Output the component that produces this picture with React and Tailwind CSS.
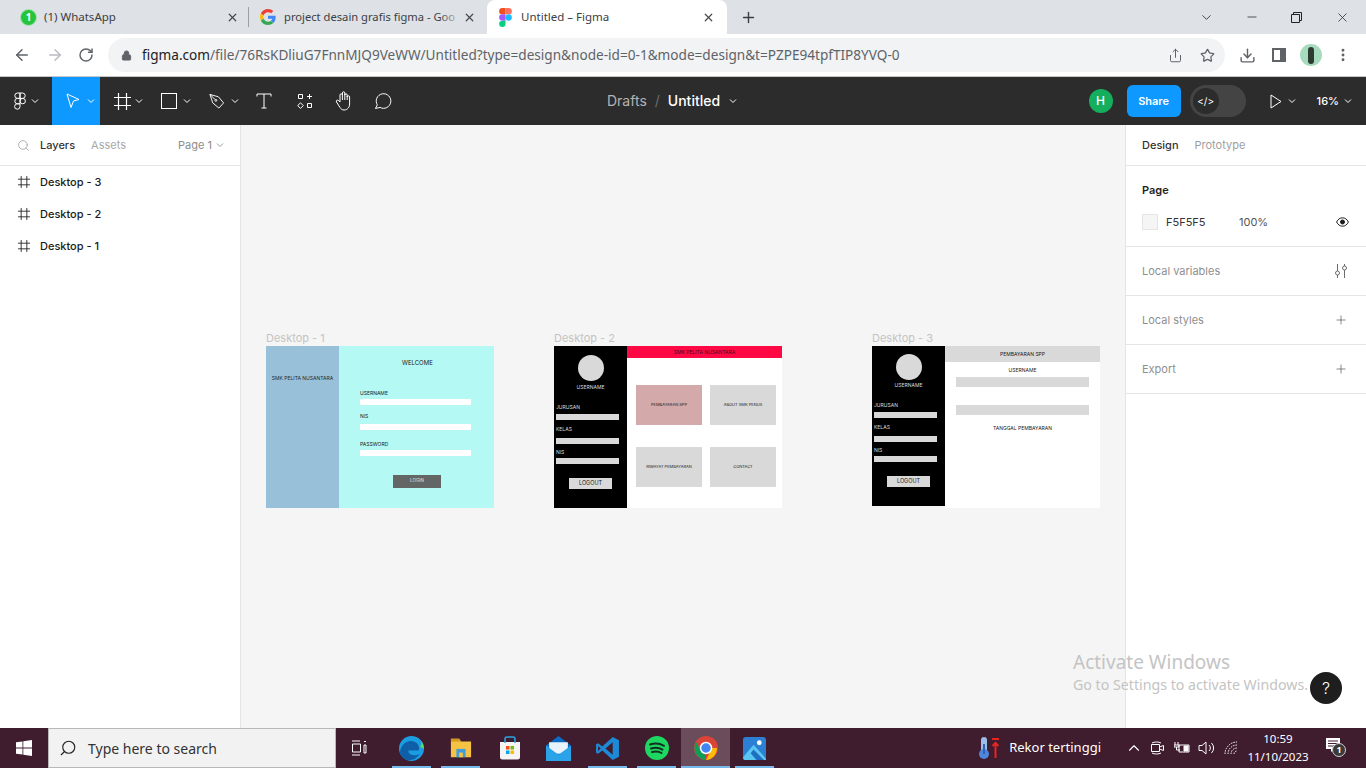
import React from 'react';
import { Search, ChevronDown, Plus, X, ArrowLeft, ArrowRight, RotateCw, Lock, Star, Download, Share, MoreVertical, Minus, ChevronUp } from 'lucide-react';

const sans = { fontFamily: '"Segoe UI", "Noto Sans", sans-serif' };
const inter = { fontFamily: 'Inter, sans-serif' };

const Caret = ({ className = 'text-white' }) => (
  <svg width="8" height="8" viewBox="0 0 8 8" className={className} fill="none" stroke="currentColor">
    <path d="M1 2.5 L4 5.5 L7 2.5" />
  </svg>
);

const FrameIcon = ({ size = 17, color = 'white' }) => (
  <svg width={size} height={size} viewBox="0 0 17 17" fill="none" stroke={color} strokeWidth="1.2">
    <path d="M4.5 0v17M12.5 0v17M0 4.5h17M0 12.5h17" />
  </svg>
);

const FigmaLogo = () => (
  <svg width="13" height="19" viewBox="0 0 38 57">
    <path fill="#f24e1e" d="M19 0H9.5a9.5 9.5 0 0 0 0 19H19z" />
    <path fill="#ff7262" d="M19 0h9.5a9.5 9.5 0 0 1 0 19H19z" />
    <path fill="#a259ff" d="M19 19H9.5a9.5 9.5 0 0 0 0 19H19z" />
    <circle fill="#1abcfe" cx="28.5" cy="28.5" r="9.5" />
    <path fill="#0acf83" d="M9.5 38H19v9.5a9.5 9.5 0 1 1-9.5-9.5z" />
  </svg>
);

const GoogleLogo = () => (
  <svg width="16" height="16" viewBox="0 0 48 48">
    <path fill="#ea4335" d="M24 9.5c3.5 0 6.7 1.2 9.2 3.6l6.9-6.9C35.9 2.4 30.4 0 24 0 14.6 0 6.5 5.4 2.6 13.2l8 6.2C12.5 13.6 17.8 9.5 24 9.5z" />
    <path fill="#4285f4" d="M46.9 24.5c0-1.6-.1-3.1-.4-4.5H24v9h12.9c-.6 3-2.2 5.5-4.7 7.2l7.7 6c4.5-4.2 7-10.3 7-17.7z" />
    <path fill="#fbbc05" d="M10.5 28.6c-.5-1.4-.8-3-.8-4.6s.3-3.2.8-4.6l-8-6.2C.9 16.4 0 20.1 0 24s.9 7.6 2.6 10.8z" />
    <path fill="#34a853" d="M24 48c6.5 0 11.9-2.1 15.9-5.8l-7.7-6c-2.2 1.4-4.9 2.3-8.2 2.3-6.2 0-11.5-4.2-13.4-9.8l-8 6.2C6.5 42.6 14.6 48 24 48z" />
  </svg>
);

const RestoreIcon = () => (
  <svg width="11" height="11" viewBox="0 0 11 11" fill="none" stroke="#202124">
    <path d="M.5 2.5h8v8h-8z" />
    <path d="M2.5 2.5v-2h8v8h-2" />
  </svg>
);

const Tabs = () => (
  <div className="flex h-[34px] items-end bg-[#dee1e6] pl-[8px]">
    <div className="flex h-[34px] w-[240px] items-center pl-[13px] pr-[9px]">
      <span className="flex h-[15px] w-[15px] items-center justify-center rounded-full bg-[#25c43e] text-[10px] font-bold leading-none text-white ring-1 ring-[#9fe0aa]">1</span>
      <span className="ml-[8px] flex-1 text-[11.5px] text-[#3c4043]" style={sans}>(1) WhatsApp</span>
      <X size={13} strokeWidth={2.2} className="text-[#45494e]" />
    </div>
    <div className="h-[20px] w-px self-center bg-[#9aa0a6]" />
    <div className="flex h-[34px] w-[238px] items-center pl-[11px] pr-[11px]">
      <GoogleLogo />
      <span className="relative ml-[8px] flex-1 whitespace-nowrap text-[11.2px] text-[#3c4043]" style={sans}>
        project desain grafis figma - Goo
        <span className="absolute right-0 top-0 h-full w-[24px] bg-gradient-to-r from-transparent to-[#dee1e6]" />
      </span>
      <X size={13} strokeWidth={2.2} className="text-[#45494e]" />
    </div>
    <div className="flex h-[34px] w-[240px] items-center rounded-t-lg bg-white pl-[12px] pr-[12px]">
      <FigmaLogo />
      <span className="ml-[9px] flex-1 text-[11.5px] text-[#3c4043]" style={sans}>Untitled – Figma</span>
      <X size={13} strokeWidth={2.2} className="text-[#45494e]" />
    </div>
    <Plus size={17} strokeWidth={2} className="mb-[8px] ml-[13px] text-[#3c4043]" />
    <div className="flex-1" />
    <div className="flex h-[34px] items-center text-[#3c4043]">
      <ChevronDown size={15} strokeWidth={1.5} className="mr-[31px]" />
      <Minus size={14} strokeWidth={1.5} className="mr-[32px]" />
      <RestoreIcon />
      <X size={15} strokeWidth={1.4} className="ml-[33px] mr-[16px]" />
    </div>
  </div>
);

const AddressBar = () => (
  <div className="flex h-[43px] items-center border-b border-[#c8c8c8] bg-white pl-[13px]">
    <ArrowLeft size={18} strokeWidth={2} className="text-[#5f6368]" />
    <ArrowRight size={18} strokeWidth={2} className="ml-[15px] text-[#b9bcc0]" />
    <RotateCw size={16} strokeWidth={2.2} className="ml-[14px] text-[#5f6368]" />
    <div className="ml-[14px] flex h-[34px] w-[1117px] items-center rounded-full bg-[#f1f3f4] pl-[13px] pr-[10px]">
      <Lock size={11} fill="#5f6368" strokeWidth={2} className="text-[#5f6368]" />
      <span className="ml-[10px] flex-1 whitespace-nowrap text-[13.6px] text-[#5f6368]" style={sans}>
        <span className="text-[#202124]">figma.com</span>/file/76RsKDliuG7FnnMJQ9VeWW/Untitled?type=design&amp;node-id=0-1&amp;mode=design&amp;t=PZPE94tpfTIP8YVQ-0
      </span>
      <Share size={15} strokeWidth={1.6} className="mr-[17px] text-[#5f6368]" />
      <Star size={15} strokeWidth={2} className="text-[#5f6368]" />
    </div>
    <Download size={17} strokeWidth={2} className="ml-[14px] text-[#5f6368]" />
    <span className="ml-[16px] h-[14px] w-[14px] border-[2px] border-r-[6px] border-[#5f6368]" />
    <span className="ml-[14px] flex h-[22px] w-[22px] items-center justify-center rounded-full bg-[#a6dcbd]">
      <span className="h-[17px] w-[6px] rounded-sm bg-[#2d3b30]" />
    </span>
    <MoreVertical size={16} strokeWidth={2.4} className="ml-[13px] text-[#5f6368]" />
  </div>
);

const FigmaToolbar = () => (
  <div className="flex h-[48px] items-center bg-[#2c2c2c] text-white">
    <div className="flex w-[52px] items-center justify-center gap-[5px]">
      <svg width="12" height="18" viewBox="0 0 12 18" fill="none" stroke="white">
        <path d="M6 1H3.5a2.7 2.7 0 0 0 0 5.4H6zM6 1h2.5a2.7 2.7 0 0 1 0 5.4H6zM6 6.400H3.5a2.7 2.7 0 0 0 0 5.4H6z" />
        <circle cx="8.7" cy="9.1" r="2.7" />
        <path d="M3.5 11.8H6v2.7a2.7 2.7 0 1 1-2.5-2.7z" />
      </svg>
      <Caret />
    </div>
    <div className="flex h-[48px] w-[48px] items-center gap-[7px] bg-[#0d99ff] pl-[14px]">
      <svg width="14" height="16" viewBox="0 0 14 16" fill="none" stroke="white">
        <path d="M1 1 L13 6.5 L7.5 8 L5 14.5 Z" />
      </svg>
      <Caret />
    </div>
    <span className="ml-[14px]"><FrameIcon /></span>
    <Caret className="ml-[4px] text-white" />
    <span className="ml-[18px] h-[16px] w-[16px] border border-white" />
    <Caret className="ml-[6px] text-white" />
    <svg width="16" height="17" viewBox="0 0 17 17" fill="none" stroke="white" className="ml-[18px]">
      <path d="M1 1 L10 3.5 L15.5 10 L10.5 15.5 L4 10 Z M1 1 L6.5 6.5" />
      <circle cx="7.3" cy="7.3" r="1" />
    </svg>
    <Caret className="ml-[6px] text-white" />
    <svg width="16" height="16" viewBox="0 0 16 16" fill="none" stroke="white" className="ml-[17px]">
      <path d="M1 3.5V1h14v2.5M8 1v14M5.5 15h5" />
    </svg>
    <svg width="16" height="16" viewBox="0 0 16 16" fill="none" stroke="white" className="ml-[25px]">
      <path d="M1.5 1.5h4v4h-4zM10.5 10.5h4v4h-4zM12.5 1v5M10 3.5h5M3.5 9.8l2.8 2.8-2.8 2.8-2.8-2.8z" />
    </svg>
    <svg width="18" height="20" viewBox="0 0 18 20" fill="none" stroke="white" className="ml-[22px]">
      <path d="M5 11V4a1.2 1.2 0 0 1 2.4 0V2a1.2 1.2 0 0 1 2.4 0v2a1.2 1.2 0 0 1 2.4 0v2a1.2 1.2 0 0 1 2.4 0v7c0 3-2 6-5.5 6H9c-2 0-3-1-4-2.5L1.5 11c-1-1.5 1-2.5 2-1.5z M7.4 4v5M9.8 3v6M12.2 5v4" />
    </svg>
    <svg width="18" height="18" viewBox="0 0 18 18" fill="none" stroke="white" className="ml-[21px]">
      <path d="M1.5 16.5 L3.3 12.8 A7.3 7.3 0 1 1 6 15.4 Z" />
    </svg>
    <div className="flex-1" />
    <div className="absolute left-[607px] top-[91px] flex items-center text-[14px] leading-[20px]" style={inter}>
      <span className="text-[#b3b3b3]">Drafts</span>
      <span className="mx-[8px] text-[#6e6e6e]">/</span>
      <span className="font-medium text-white">Untitled</span>
      <Caret className="ml-[9px] text-white" />
    </div>
    <span className="flex h-[24px] w-[24px] items-center justify-center rounded-full bg-[#14ae5c] text-[12px] font-medium" style={inter}>H</span>
    <span className="ml-[14px] flex h-[32px] w-[54px] items-center justify-center rounded-md bg-[#0d99ff] text-[11px] font-semibold" style={inter}>Share</span>
    <div className="ml-[9px] flex h-[32px] w-[56px] items-center rounded-full bg-[#444444] pl-[3px]">
      <span className="flex h-[26px] w-[26px] items-center justify-center rounded-full bg-[#2c2c2c] text-[10px]" style={inter}>&lt;/&gt;</span>
    </div>
    <svg width="12" height="15" viewBox="0 0 12 15" fill="none" stroke="white" className="ml-[24px]">
      <path d="M1 1 L11 7.5 L1 14 Z" />
    </svg>
    <Caret className="ml-[6px] text-white" />
    <span className="ml-[21px] text-[11px] font-medium" style={inter}>16%</span>
    <Caret className="ml-[5px] mr-[14px] text-white" />
  </div>
);

const LeftPanel = () => (
  <aside className="w-[241px] shrink-0 border-r border-[#e5e5e5] bg-white text-[11px]" style={inter}>
    <div className="flex h-[41px] items-center border-b border-[#e5e5e5] pl-[17px] pr-[16px]">
      <Search size={13} strokeWidth={1.4} className="text-[#9b9b9b]" />
      <span className="ml-[10px] font-medium text-[#333333]">Layers</span>
      <span className="ml-[16px] text-[#a8a8a8]">Assets</span>
      <span className="flex-1" />
      <span className="text-[#8c8c8c]">Page 1</span>
      <Caret className="ml-[4px] text-[#9b9b9b]" />
    </div>
    {['Desktop - 3', 'Desktop - 2', 'Desktop - 1'].map(name => (
      <div key={name} className="flex h-[32px] items-center pl-[18px] text-[#1a1a1a]">
        <FrameIcon size={12} color="#1a1a1a" />
        <span className="ml-[10px] font-medium">{name}</span>
      </div>
    ))}
  </aside>
);

const RightRow = ({ label, children }) => (
  <div className="flex h-[49px] items-center justify-between border-b border-[#e5e5e5] pl-[16px] pr-[18px]">
    <span className="text-[#8f8f8f]">{label}</span>
    {children}
  </div>
);

const RightPanel = () => (
  <aside className="w-[241px] shrink-0 border-l border-[#e5e5e5] bg-white text-[11px]" style={inter}>
    <div className="flex h-[41px] items-center border-b border-[#e5e5e5] pl-[16px]">
      <span className="font-medium text-[#333333]">Design</span>
      <span className="ml-[16px] text-[#9e9e9e]">Prototype</span>
    </div>
    <div className="h-[81px] border-b border-[#e5e5e5] pl-[16px] pr-[17px] pt-[17px]">
      <div className="font-semibold leading-[15px] text-[#1f1f1f]">Page</div>
      <div className="mt-[16px] flex h-[16px] items-center text-[#333333]">
        <span className="h-[16px] w-[16px] border border-[#e5e5e5] bg-[#f5f5f5]" />
        <span className="ml-[8px] w-[73px]">F5F5F5</span>
        <span className="text-[#555555]">100%</span>
        <span className="flex-1" />
        <svg width="13" height="10" viewBox="0 0 13 10" fill="none" stroke="#1a1a1a">
          <path d="M.6 5C2 2.2 4 .8 6.5.8S11 2.2 12.4 5C11 7.8 9 9.2 6.5 9.2S2 7.8.6 5z" />
          <circle cx="6.5" cy="5" r="2" fill="#1a1a1a" />
        </svg>
      </div>
    </div>
    <RightRow label="Local variables">
      <svg width="14" height="14" viewBox="0 0 14 14" fill="none" stroke="#6b6b6b">
        <path d="M3.5 0v7M3.5 11v3M10.5 0v2M10.5 6v8" />
        <circle cx="3.5" cy="9" r="2" />
        <circle cx="10.5" cy="4" r="2" />
      </svg>
    </RightRow>
    <RightRow label="Local styles">
      <Plus size={14} strokeWidth={1} className="text-[#333333]" />
    </RightRow>
    <RightRow label="Export">
      <Plus size={14} strokeWidth={1} className="text-[#333333]" />
    </RightRow>
  </aside>
);

const FrameLabel = ({ children, left }) => (
  <span className="absolute top-[208px] text-[11px] leading-none text-[#c4c4c4]" style={{ left, ...inter }}>{children}</span>
);

const Tiny = ({ children, className = '' }) => (
  <span className={`whitespace-nowrap leading-none ${className}`} style={inter}>{children}</span>
);

const Desktop1 = () => (
  <div className="absolute left-[25px] top-[221px] flex h-[162px] w-[228px]">
    <div className="w-[73px] bg-[#98c1d9] pt-[30px] text-center">
      <Tiny className="block text-[5px] text-[#1d2a30]">SMK PELITA NUSANTARA</Tiny>
    </div>
    <div className="flex-1 bg-[#b5f9f4] pl-[21px]">
      <Tiny className="mt-[14px] block pl-[42px] text-[6px] text-[#1a1a1a]">WELCOME</Tiny>
      <Tiny className="mt-[25px] block text-[5px] text-[#1a1a1a]">USERNAME</Tiny>
      <div className="mt-[3px] h-[6px] w-[111px] bg-white" />
      <Tiny className="mt-[9px] block text-[5px] text-[#1a1a1a]">NIS</Tiny>
      <div className="mt-[5px] h-[6px] w-[111px] bg-white" />
      <Tiny className="mt-[12px] block text-[5px] text-[#1a1a1a]">PASSWORD</Tiny>
      <div className="mt-[3px] h-[6px] w-[111px] bg-white" />
      <div className="ml-[33px] mt-[19px] flex h-[13px] w-[48px] items-center justify-center bg-[#626664]">
        <Tiny className="text-[4.5px] text-[#e2e2e2]">LOGIN</Tiny>
      </div>
    </div>
  </div>
);

const SideProfile = ({ raised }) => (
  <div className="flex h-full w-[73px] flex-col bg-black px-[2px] text-white">
    <span className={`mx-auto h-[26px] w-[26px] rounded-full bg-[#d9d9d9] ${raised ? 'mt-[8px]' : 'mt-[9px]'}`} />
    <Tiny className={`self-center text-[5px] text-[#dddddd] ${raised ? 'mt-[3px]' : 'mt-[4px]'}`}>USERNAME</Tiny>
    <Tiny className="mt-[15px] text-[5px] text-[#dddddd]">JURUSAN</Tiny>
    <div className="mt-[4px] h-[6px] w-[63px] bg-[#d9d9d9]" />
    <Tiny className="mt-[7px] text-[5px] text-[#dddddd]">KELAS</Tiny>
    <div className="mt-[6px] h-[6px] w-[63px] bg-[#d9d9d9]" />
    <Tiny className="mt-[6px] text-[5px] text-[#dddddd]">NIS</Tiny>
    <div className="mt-[3px] h-[6px] w-[63px] bg-[#d9d9d9]" />
    <div className="ml-[13px] mt-[14px] flex h-[11px] w-[43px] items-center justify-center bg-[#d9d9d9]">
      <Tiny className="text-[5.5px] text-[#1a1a1a]">LOGOUT</Tiny>
    </div>
  </div>
);

const MenuCard = ({ label, className = 'bg-[#d9d9d9]' }) => (
  <div className={`flex h-[40px] w-[66px] items-center justify-center ${className}`}>
    <Tiny className="text-[4px] text-[#222222]">{label}</Tiny>
  </div>
);

const Desktop2 = () => (
  <div className="absolute left-[313px] top-[221px] flex h-[162px] w-[228px]">
    <SideProfile />
    <div className="flex-1 bg-white">
      <div className="flex h-[12px] items-center justify-center bg-[#ff0844]">
        <Tiny className="text-[5px] text-[#4a0a1c]">SMK PELITA NUSANTARA</Tiny>
      </div>
      <div className="ml-[9px] mt-[27px] grid w-[140px] grid-cols-2 gap-x-[8px] gap-y-[22px]">
        <MenuCard label="PEMBAYARAN SPP" className="bg-[#d4a9a9]" />
        <MenuCard label="ABOUT SMK PENUS" />
        <MenuCard label="RIWAYAT PEMBAYARAN" />
        <MenuCard label="CONTACT" />
      </div>
    </div>
  </div>
);

const Desktop3 = () => (
  <div className="absolute left-[631px] top-[221px] flex h-[162px] w-[228px]">
    <div className="h-[160px] w-[73px]">
      <SideProfile raised />
    </div>
    <div className="flex-1 bg-white">
      <div className="flex h-[16px] items-center justify-center bg-[#d9d9d9]">
        <Tiny className="text-[5px] text-[#1a1a1a]">PEMBAYARAN SPP</Tiny>
      </div>
      <Tiny className="mt-[6px] block text-center text-[5px] text-[#1a1a1a]">USERNAME</Tiny>
      <div className="ml-[11px] mt-[4px] h-[10px] w-[133px] bg-[#d9d9d9]" />
      <div className="ml-[11px] mt-[18px] h-[10px] w-[133px] bg-[#d9d9d9]" />
      <Tiny className="mt-[11px] block text-center text-[5px] text-[#1a1a1a]">TANGGAL PEMBAYARAN</Tiny>
    </div>
  </div>
);

const Canvas = () => (
  <main className="relative flex-1 overflow-hidden bg-[#f5f5f5]">
    <FrameLabel left={25}>Desktop - 1</FrameLabel>
    <FrameLabel left={313}>Desktop - 2</FrameLabel>
    <FrameLabel left={631}>Desktop - 3</FrameLabel>
    <Desktop1 />
    <Desktop2 />
    <Desktop3 />
  </main>
);

const WinLogo = () => (
  <svg width="16" height="16" viewBox="0 0 16 16" fill="white">
    <path d="M0 2.3 6.5 1.4V7.600H0zM7.3 1.3 16 0V7.600H7.3zM0 8.400H6.5V14.600L0 13.700zM7.3 8.400H16V16L7.3 14.700z" />
  </svg>
);

const TaskIcon = ({ children, active, open }) => (
  <div className={`relative flex h-[40px] w-[49px] items-center justify-center ${active ? 'bg-[#6b4c5a]' : ''}`}>
    {children}
    {open && <span className={`absolute bottom-0 h-[2px] bg-[#76b9ed] ${active ? 'left-0 right-0' : 'left-[5px] right-[5px]'}`} />}
  </div>
);

const Taskbar = () => (
  <footer className="flex h-[40px] items-center bg-[#3f1c2e] text-white">
    <div className="flex w-[48px] items-center justify-center"><WinLogo /></div>
    <div className="flex h-[40px] w-[288px] items-center border border-[#b8b8b8] bg-[#f2f2f2] pl-[10px]">
      <Search size={18} strokeWidth={1.5} className="-scale-x-100 text-[#222222]" />
      <span className="ml-[11px] text-[14px] text-[#333333]" style={sans}>Type here to search</span>
    </div>
    <div className="flex h-[40px] w-[46px] items-center justify-center">
      <svg width="16" height="16" viewBox="0 0 16 16" fill="none" stroke="white">
        <path d="M1 1h8M1 15h8M1.5 4h8v8h-8zM13 1.5h2M13 5h2v8h-2z" />
      </svg>
    </div>
    <div className="ml-[5px] flex">
      <TaskIcon open>
        <svg width="25" height="25" viewBox="0 0 24 24">
          <circle cx="12" cy="12" r="12" fill="#1b9de2" />
          <path d="M1 15C2 8 8 4 13 5c5 1 7 5 6 9H9c0 4 5 6 11 3-3 5-8 7-12 6-4-1-7-4-7-8z" fill="#0f5fa8" />
          <path d="M24 12c0-6-5-11-12-11 8 0 12 6 8 9 2 1 3 2 4 2z" fill="#59d96a" />
        </svg>
      </TaskIcon>
      <TaskIcon open>
        <svg width="22" height="22" viewBox="0 0 24 22">
          <path d="M1 1h9l2 3h11v17H1z" fill="#f6c244" />
          <path d="M1 1h9l2 3H1z" fill="#d39a1e" />
          <path d="M7 12h10v9H7z" fill="#3f9ddc" />
          <path d="M10 16h4v5h-4z" fill="#f6c244" />
        </svg>
      </TaskIcon>
      <TaskIcon>
        <svg width="22" height="24" viewBox="0 0 22 24">
          <path d="M1 6h20v15a2.5 2.5 0 0 1-2.5 2.5h-15A2.5 2.5 0 0 1 1 21z" fill="#f4f4f4" />
          <path d="M6 7V3a2 2 0 0 1 2-2h6a2 2 0 0 1 2 2v4" fill="none" stroke="#2aa3e8" strokeWidth="1.5" />
          <path d="M7 10h3.5v3.5H7z" fill="#f25022" />
          <path d="M11.5 10H15v3.5h-3.5z" fill="#7fba00" />
          <path d="M7 14.5h3.5V18H7z" fill="#00a4ef" />
          <path d="M11.5 14.5H15V18h-3.5z" fill="#ffb900" />
        </svg>
      </TaskIcon>
      <TaskIcon>
        <svg width="25" height="25" viewBox="0 0 24 24">
          <path d="M0 9 12 0l12 9v15H0z" fill="#0a6cc4" />
          <path d="M3 6h18v11H3z" fill="#e8f3fb" />
          <path d="M0 9l12 9 12-9v15H0z" fill="#2aa3e8" />
        </svg>
      </TaskIcon>
      <TaskIcon open>
        <svg width="25" height="25" viewBox="0 0 24 24">
          <path d="M17 1l6 3v16l-6 3L7 14l-4 3-2-1V8l2-1 4 3z" fill="#1c8ad6" />
          <path d="M17 6v12l-7-6z" fill="#3f1c2e" />
          <path d="M3 9.5v5l2.5-2.5z" fill="#3f1c2e" />
        </svg>
      </TaskIcon>
      <TaskIcon open>
        <svg width="24" height="24" viewBox="0 0 24 24" fill="none">
          <circle cx="12" cy="12" r="12" fill="#1ed760" />
          <path d="M5 8.5c5-1.5 10-1 14 1.3M6 12.5c4-1 8.5-.7 11.5 1.1M7 16c3.5-.8 7-.5 9.5 1" stroke="#14301e" strokeWidth="2" strokeLinecap="round" />
        </svg>
      </TaskIcon>
      <TaskIcon active open>
        <svg width="24" height="24" viewBox="0 0 24 24">
          <circle cx="12" cy="12" r="12" fill="#db4437" />
          <path d="M12 24 18 12h5a12 12 0 0 1-11 12z" fill="#fbbc05" />
          <path d="M12 24A12 12 0 0 1 2 6l6 10a5 5 0 0 0 4 3z" fill="#0f9d58" />
          <circle cx="12" cy="12" r="5.5" fill="#4285f4" stroke="white" strokeWidth="1.5" />
        </svg>
      </TaskIcon>
      <TaskIcon open>
        <svg width="23" height="23" viewBox="0 0 24 24">
          <rect width="24" height="24" rx="3" fill="#2b7fd4" />
          <path d="M0 21 11 8l9 10 4 5v1H3a3 3 0 0 1-3-3z" fill="#5cc6f2" />
          <path d="M14 24 8 17l3-4 11 11z" fill="#1f6fc0" />
          <circle cx="17" cy="6" r="2.5" fill="white" />
        </svg>
      </TaskIcon>
    </div>
    <div className="flex-1" />
    <svg width="22" height="24" viewBox="0 0 22 24" className="mr-[9px]">
      <rect x="3" y="1" width="6" height="17" rx="3" fill="#9dbbe8" />
      <circle cx="6" cy="18" r="5" fill="#4f86d9" />
      <path d="M6 8v10" stroke="#2d62b8" strokeWidth="2" />
      <path d="M14 3h7M17.5 22V7M14.5 10l3-3 3 3" stroke="#e8251f" strokeWidth="2" fill="none" />
    </svg>
    <span className="text-[13px] text-white" style={sans}>Rekor tertinggi</span>
    <ChevronUp size={18} strokeWidth={1.5} className="ml-[24px]" />
    <svg width="16" height="18" viewBox="0 0 16 18" fill="none" stroke="white" className="ml-[7px]">
      <path d="M2 4a6 3 0 0 1 9 0M2 14a6 3 0 0 0 9 0M1.5 5.5h8v7h-8zM9.5 8l4-1.5v5l-4-1.5" />
    </svg>
    <svg width="16" height="14" viewBox="0 0 16 14" fill="none" stroke="white" className="ml-[8px]">
      <path d="M1 1v3M4 1v3M0 4h5v2H0zM2.5 6v3H6M5 4h10v7H5z" />
      <path d="M10 5h4v5h-4z" fill="white" />
    </svg>
    <svg width="17" height="14" viewBox="0 0 17 14" fill="none" stroke="white" className="ml-[8px]">
      <path d="M1 4.5h3L8 1v12L4 9.5H1zM11 4a4 4 0 0 1 0 6M13.5 2a7 7 0 0 1 0 10" />
    </svg>
    <svg width="15" height="14" viewBox="0 0 15 14" fill="none" stroke="white" className="ml-[9px]">
      <path d="M1 13A12 12 0 0 1 13 1M4 13a9 9 0 0 1 9-9M7 13a6 6 0 0 1 6-6M10 13a3 3 0 0 1 3-3" strokeDasharray="1.5 1" />
    </svg>
    <div className="ml-[6px] flex w-[66px] flex-col items-center text-[11.5px] leading-[18px]" style={sans}>
      <span>10:59</span>
      <span>11/10/2023</span>
    </div>
    <div className="relative ml-[14px] mr-[21px] h-[20px] w-[20px]">
      <svg width="16" height="15" viewBox="0 0 16 15" fill="white">
        <path d="M1 0h14v11H9l-3 3v-3H1z" />
        <path d="M3 3h10M3 5.5h10M3 8h7" stroke="#3f1c2e" />
      </svg>
      <span className="absolute left-[7px] top-[5px] flex h-[14px] w-[14px] items-center justify-center rounded-full border border-[#d0d0d0] bg-[#3a3a3a] text-[9px] font-bold" style={sans}>1</span>
    </div>
  </footer>
);

// windows paints this over whatever is on screen
const ActivateWatermark = () => (
  <div className="pointer-events-none absolute left-[1073px] top-[650px] whitespace-nowrap text-[#c4c4c4]" style={sans}>
    <div className="text-[19px] leading-[25px]">Activate Windows</div>
    <div className="text-[14.2px] leading-[20px]">Go to Settings to activate Windows.</div>
  </div>
);

const App = () => (
  <div className="relative flex h-[768px] w-[1366px] flex-col overflow-hidden bg-white">
    <Tabs />
    <AddressBar />
    <FigmaToolbar />
    <div className="flex h-[603px]">
      <LeftPanel />
      <Canvas />
      <RightPanel />
    </div>
    <Taskbar />
    <ActivateWatermark />
    <span className="absolute left-[1310px] top-[672px] flex h-[32px] w-[32px] items-center justify-center rounded-full bg-[#1e1e1e] text-[16px] font-light text-white" style={inter}>?</span>
  </div>
);

export default App;
